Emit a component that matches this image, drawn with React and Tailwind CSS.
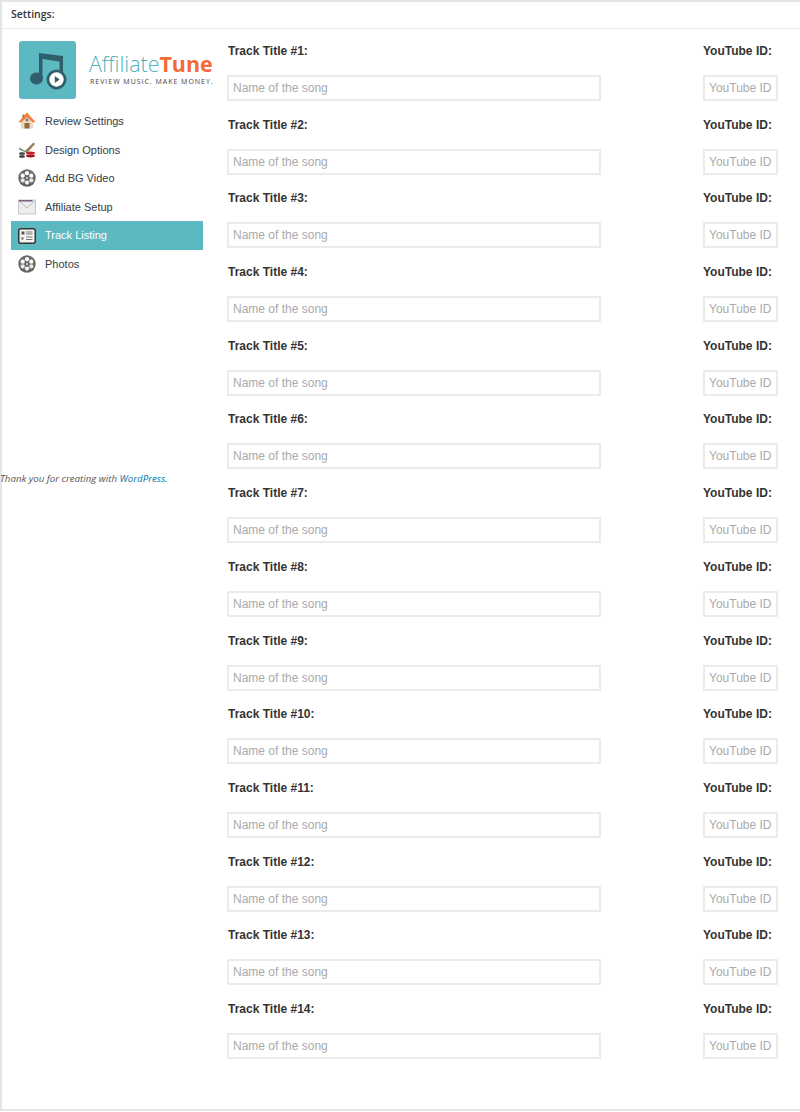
const tracks = [1, 2, 3, 4, 5, 6, 7, 8, 9, 10, 11, 12, 13, 14];

/* -------------------------------------------------------------------------- */
/*  Icons — small inline drawings for the logo and the menu                    */
/* -------------------------------------------------------------------------- */

function LogoMark() {
  return (
    <svg width="57" height="58" viewBox="0 0 57 58" className="shrink-0">
      <rect width="57" height="58" rx="3" fill="#5cb9c1" />
      <path d="M20 12 L44 15 V32 H40.5 V20.5 L23.5 18 V38 H20 Z" fill="#2f5f6b" />
      <ellipse cx="17.5" cy="37.5" rx="6.5" ry="6" fill="#2f5f6b" />
      <circle cx="37.5" cy="38.5" r="10" fill="#2f5f6b" />
      <circle cx="37.5" cy="38.5" r="7.2" fill="#ffffff" />
      <path d="M35.8 35 L40.6 38.5 L35.8 42 Z" fill="#2f5f6b" />
    </svg>
  );
}

function HouseIcon() {
  return (
    <svg width="18" height="18" viewBox="0 0 18 18">
      <path d="M3 8 L9 3 L15 8 V16.5 H3 Z" fill="#ecd9bd" />
      <path d="M0.5 10 L9 0.5 L17.5 10 L15 10.5 L9 5 L3 10.5 Z" fill="#ee7f3c" />
      <path d="M4.5 2.5 H6.5 V4 L4.5 6.5 Z" fill="#c9622a" />
      <rect x="6.5" y="11" width="5" height="5.5" fill="#8b6a45" />
      <circle cx="9" cy="8" r="1.4" fill="#6f7a85" />
    </svg>
  );
}

function BrushIcon() {
  return (
    <svg width="18" height="18" viewBox="0 0 18 18">
      <path d="M6.5 10.5 L15.5 1.5 L17 3 L9 12 Z" fill="#9a7a5a" />
      <path d="M1 6.5 L8.5 10.5 L8 11.5 L1 8.5 Z" fill="#6f9a70" />
      <ellipse cx="4" cy="12.5" rx="3" ry="1.5" fill="#555555" />
      <ellipse cx="12.5" cy="12" rx="4.5" ry="1.5" fill="#c8202c" />
      <ellipse cx="4" cy="15.5" rx="3" ry="1.2" fill="#333333" />
      <ellipse cx="12.5" cy="15" rx="4.5" ry="1.4" fill="#a3141f" />
    </svg>
  );
}

function ReelIcon() {
  return (
    <svg width="18" height="18" viewBox="0 0 18 18">
      <circle cx="9" cy="9" r="8.7" fill="#6a6a6a" />
      <path d="M1 11 A8.7 8.7 0 0 0 17 11 L15 15 L9 16 L3 15 Z" fill="#4a4a4a" />
      <circle cx="9" cy="4.2" r="2.1" fill="#ffffff" />
      <circle cx="9" cy="13.6" r="2.1" fill="#f2f2f2" />
      <circle cx="4.7" cy="6.7" r="2.1" fill="#ffffff" />
      <circle cx="13.3" cy="6.7" r="2.1" fill="#ffffff" />
      <circle cx="4.7" cy="11.4" r="2.1" fill="#e6e6e6" />
      <circle cx="13.3" cy="11.4" r="2.1" fill="#e6e6e6" />
      <circle cx="9" cy="9" r="1" fill="#dddddd" />
    </svg>
  );
}

function MailIcon() {
  return (
    <svg width="18" height="18" viewBox="0 0 18 18">
      <rect x="0.5" y="2" width="17" height="14" fill="#ececec" stroke="#c9c9c9" />
      <path d="M1 2.5 L9 10 L17 2.5" fill="none" stroke="#bdbdbd" />
      <path d="M1 2 H4 L3 3.5 H1 Z M7 2 H11 L10 3.5 H8 Z" fill="#b5403f" />
      <path d="M4 2 H7 L8 3.5 H3 Z M11 2 H14 L15 3.5 H10 Z" fill="#4b6a96" />
    </svg>
  );
}

function ListIcon() {
  return (
    <svg width="18" height="18" viewBox="0 0 18 18">
      <rect x="0.75" y="1.75" width="16.5" height="14.5" rx="2" fill="#f4f4f4" stroke="#333333" strokeWidth="1.5" />
      <rect x="3.5" y="4.5" width="3" height="3" fill="#555555" />
      <path d="M8 5 H14.5 M8 7 H14.5 M8 10 H14.5 M8 12.5 H14.5" stroke="#777777" strokeWidth="1" />
      <rect x="3.5" y="10.5" width="2" height="2" fill="#555555" />
    </svg>
  );
}

const menu = [
  { label: "Review Settings", icon: <HouseIcon /> },
  { label: "Design Options", icon: <BrushIcon /> },
  { label: "Add BG Video", icon: <ReelIcon /> },
  { label: "Affiliate Setup", icon: <MailIcon /> },
  { label: "Track Listing", icon: <ListIcon />, active: true },
  { label: "Photos", icon: <ReelIcon /> },
];

/* -------------------------------------------------------------------------- */
/*  Sidebar — logo, menu and the footer line                                   */
/* -------------------------------------------------------------------------- */

function Sidebar() {
  return (
    <aside className="w-[192px] shrink-0 ml-[9px]">
      <div className="flex items-center pl-[8px] pt-[12px]">
        <LogoMark />
        <div className="ml-[13px] -mt-[3px]">
          <div className="text-[21.4px] leading-[25px] whitespace-nowrap font-['Open_Sans',sans-serif] font-light text-[#4fb3bd]">
            Affiliate<span className="font-bold text-[#f26a35]">Tune</span>
          </div>
          <div className="mt-[1px] pl-[1px] text-[7px] leading-[9px] whitespace-nowrap font-['Open_Sans',sans-serif] tracking-[0.98px] text-[#444444]">
            REVIEW MUSIC. MAKE MONEY.
          </div>
        </div>
      </div>
      <nav className="mt-[8px]">
        {menu.map((item) => (
          <div
            key={item.label}
            className={`flex h-[28.6px] items-center pl-[7px] text-[11px] ${
              item.active ? "bg-[#5cb9c1] text-white" : "text-[#333a44]"
            }`}
          >
            <span className="w-[27px] shrink-0">{item.icon}</span>
            {item.label}
          </div>
        ))}
      </nav>
      <p className="mt-[193px] -ml-[11px] whitespace-nowrap font-['Open_Sans',sans-serif] text-[9.7px] italic leading-[14px] text-[#555555]">
        Thank you for creating with <a className="text-[#0073aa]">WordPress</a>.
      </p>
    </aside>
  );
}

/* -------------------------------------------------------------------------- */
/*  TrackRow — title and YouTube id fields                                     */
/* -------------------------------------------------------------------------- */

function TrackRow({ number }) {
  return (
    <div className="flex h-[73.7px] justify-between">
      <div className="w-[374px]">
        <label className="block h-[38px] pl-[1px] pt-[7px] text-[12px] font-bold leading-[15px] text-[#333333]">
          Track Title #{number}:
        </label>
        <input
          type="text"
          placeholder="Name of the song"
          className="h-[26px] w-full border-2 border-[#ebebeb] bg-white px-[4px] text-[12px] outline-none placeholder:text-[#aaaaaa]"
        />
      </div>
      <div className="w-[75px]">
        <label className="block h-[38px] pt-[7px] text-[12px] font-bold leading-[15px] text-[#333333] whitespace-nowrap">
          YouTube ID:
        </label>
        <input
          type="text"
          placeholder="YouTube ID"
          className="h-[26px] w-full border-2 border-[#ebebeb] bg-white px-[4px] text-[12px] outline-none placeholder:text-[#aaaaaa]"
        />
      </div>
    </div>
  );
}

export default function App() {
  return (
    <div className="h-[1112px] w-[800px] overflow-hidden bg-white font-['Liberation_Sans',sans-serif]">
      <div className="h-[1111px] border-y-2 border-l-2 border-[#e5e5e5]">
        <header className="flex h-[27px] items-center border-b border-[#eeeeee] pl-[9px] font-['Open_Sans',sans-serif] text-[10.5px] font-semibold text-[#333333]">
          Settings:
        </header>
        <div className="flex">
          <Sidebar />
          <main className="ml-[24px] mr-[22px] flex-1 pt-[8px]">
            {tracks.map((n) => (
              <TrackRow key={n} number={n} />
            ))}
          </main>
        </div>
      </div>
    </div>
  );
}
